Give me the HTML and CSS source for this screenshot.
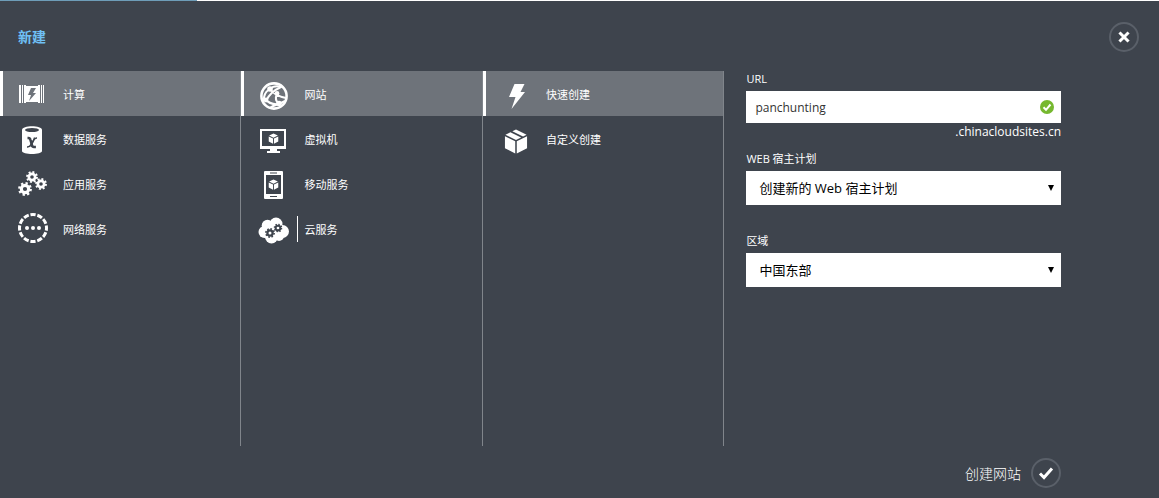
FILE: index.html
```html
<!DOCTYPE html>
<html lang="zh-CN">
<head>
  <meta charset="UTF-8" />
  <title>新建</title>
  <link rel="stylesheet" href="styles.css">
</head>
<body>

  <svg class="defs" aria-hidden="true">
    <symbol id="gear" viewBox="0 0 16 16">
      <circle cx="8" cy="8" r="4.2" fill="none" stroke="currentColor" stroke-width="3.6"/>
      <circle cx="8" cy="8" r="6.6" fill="none" stroke="currentColor" stroke-width="2.6" pathLength="16" stroke-dasharray="1 1"/>
    </symbol>
    <symbol id="box" viewBox="0 0 24 26">
      <path d="M12 0.5L8.2 2.3L19.3 7.8L23 6z M6.2 3.3L1 6L12 11.4L17.3 8.8z M0.5 7.6L11.2 12.8V25.5L0.5 20z M12.8 12.8L23.5 7.6V20L12.8 25.5z"/>
    </symbol>
    <symbol id="cube" viewBox="0 0 12 12">
      <path d="M6 0.6L10.8 2.8L6 5.2L1.2 2.8z M0.8 3.7L5.5 6V11.6L0.8 9.2z M11.2 3.7L6.5 6V11.6L11.2 9.2z"/>
    </symbol>
  </svg>

  <div class="strip"></div>

  <header class="header">
    <h1>新建</h1>
    <button class="round" type="button" aria-label="关闭">
      <svg viewBox="0 0 30 30"><path d="M11.5 11.5l7 7M18.5 11.5l-7 7" fill="none" stroke="currentColor" stroke-width="3" stroke-linecap="square"/></svg>
    </button>
  </header>

  <main class="columns">
    <nav class="menu">
      <button class="item selected" type="button">
        <svg class="icon" viewBox="0 0 32 32">
          <path d="M3 7h2v18H3z M6 7h1v18H6z M25 7h1v18h-1z M27 7h1v18h-1z"/>
          <path d="M8 7h2v1h12V7h2v18h-2v-1H10v1H8z M15 10l-3 7h3l-2 6 7-8h-3l3-5z" fill-rule="evenodd"/>
        </svg>
        <span class="label">计算</span>
      </button>
      <button class="item" type="button">
        <svg class="icon" viewBox="0 0 32 32">
          <path d="M6 7C6 2 26 2 26 7V28C26 32 6 32 6 28z"/>
          <ellipse class="hole" cx="16" cy="7" rx="7" ry="2"/>
          <path class="line" d="M18.5 14.5L15 24" stroke-width="1.2"/>
          <path class="line" d="M11.5 15h1q1.5 0 2 2l1.400 5q.5 2 2 2h2" stroke-width="2.6"/>
          <path class="line" d="M21 15q-2.300-.2-3.500 2.500l-2.500 4q-1.300 2.700-4 2.500" stroke-width="1.6"/>
        </svg>
        <span class="label">数据服务</span>
      </button>
      <button class="item" type="button">
        <svg class="icon" viewBox="0 0 32 32">
          <use href="#gear" x="10" y="3" width="12" height="12"/>
          <use href="#gear" x="19" y="10" width="12" height="12"/>
          <use href="#gear" x="2" y="14" width="14" height="14"/>
        </svg>
        <span class="label">应用服务</span>
      </button>
      <button class="item" type="button">
        <svg class="icon" viewBox="0 0 32 32">
          <circle cx="17" cy="15" r="13.5" fill="none" stroke="currentColor" stroke-width="3" pathLength="120" stroke-dasharray="7.5 2.5" stroke-dashoffset="3.7"/>
          <circle cx="11" cy="15" r="2"/><circle cx="17" cy="15" r="2"/><circle cx="23" cy="15" r="2"/>
        </svg>
        <span class="label">网络服务</span>
      </button>
    </nav>

    <nav class="menu">
      <button class="item selected" type="button">
        <svg class="icon" viewBox="0 0 32 32">
          <g fill="none" stroke="currentColor">
            <circle cx="17" cy="18" r="12.6" stroke-width="2.6"/>
            <path d="M13 11Q6 15 7 23M13 11Q17 7 25 9M13 11Q18 18 29 20M24 9Q13 14 9 23M8 21Q13 27 22 26L28 23M22 26Q15 28 13 30M20 16Q17 22 22 26" stroke-width="2"/>
          </g>
          <circle cx="13" cy="11" r="2.8"/><circle cx="9" cy="22" r="2.4"/><circle cx="22" cy="25.5" r="2.8"/><circle cx="20" cy="15.5" r="2.4"/>
        </svg>
        <span class="label">网站</span>
      </button>
      <button class="item" type="button">
        <svg class="icon" viewBox="0 0 32 32">
          <path d="M3 6h26v20h-9v2h3v2H10v-2h3v-2H3z M5 8v15h22V8z" fill-rule="evenodd"/>
          <use href="#cube" x="11" y="10" width="11" height="11"/>
        </svg>
        <span class="label">虚拟机</span>
      </button>
      <button class="item" type="button">
        <svg class="icon" viewBox="0 0 32 32">
          <path d="M8 3h17q1 0 1 1v26q0 1-1 1H8q-1 0-1-1V4q0-1 1-1z M9 7v19h15V7z M13 4.5v1h7v-1z M13 28v1h7v-1z" fill-rule="evenodd"/>
          <use href="#cube" x="11" y="11" width="11" height="11"/>
        </svg>
        <span class="label">移动服务</span>
      </button>
      <button class="item" type="button">
        <svg class="icon" viewBox="0 0 32 32">
          <circle cx="7.5" cy="19" r="6"/><circle cx="10.5" cy="12.5" r="5.8"/><circle cx="19" cy="11" r="6.5"/><circle cx="25.5" cy="18.5" r="6.5"/><circle cx="14.5" cy="24" r="6.5"/><circle cx="22" cy="23" r="5"/><circle cx="16" cy="17" r="6"/>
          <g class="dark">
            <use href="#gear" x="8" y="15" width="10" height="10"/>
            <use href="#gear" x="16.5" y="10.5" width="9" height="9"/>
          </g>
        </svg>
        <span class="label marked">云服务</span>
      </button>
    </nav>

    <nav class="menu">
      <button class="item selected" type="button">
        <svg class="icon" viewBox="0 0 32 32"><path d="M15.5 6h10l-4 8H26L12.5 31l4-12H10z"/></svg>
        <span class="label">快速创建</span>
      </button>
      <button class="item" type="button">
        <svg class="icon" viewBox="0 0 32 32"><use href="#box" x="5" y="6" width="24" height="25"/></svg>
        <span class="label">自定义创建</span>
      </button>
    </nav>

    <form class="form" id="siteForm">
      <div class="field">
        <label for="url">URL</label>
        <div class="control">
          <input type="text" id="url" value="panchunting" />
          <svg class="valid" viewBox="0 0 14 14" aria-hidden="true"><circle cx="7" cy="7" r="7"/><path d="M3.5 7.3l2.5 2.5 4.5-5.3" fill="none" stroke="#fff" stroke-width="2"/></svg>
        </div>
        <div class="hint">.chinacloudsites.cn</div>
      </div>
      <div class="field">
        <label for="plan">WEB 宿主计划</label>
        <div class="control">
          <select id="plan"><option>创建新的 Web 宿主计划</option></select>
          <svg class="arrow" viewBox="0 0 6 6" aria-hidden="true"><path d="M0 0h6L3 6z"/></svg>
        </div>
        <div class="hint"></div>
      </div>
      <div class="field">
        <label for="region">区域</label>
        <div class="control">
          <select id="region"><option>中国东部</option></select>
          <svg class="arrow" viewBox="0 0 6 6" aria-hidden="true"><path d="M0 0h6L3 6z"/></svg>
        </div>
      </div>
    </form>
  </main>

  <footer class="footer">
    <label for="create">创建网站</label>
    <button class="round" id="create" type="submit" form="siteForm">
      <svg viewBox="0 0 30 30"><path d="M9 15.5l4 4 8-9" fill="none" stroke="currentColor" stroke-width="3"/></svg>
    </button>
  </footer>

</body>
</html>
```
FILE: styles.css
```css
* {
  box-sizing: border-box;
}

body {
  margin: 0;
  min-height: 100vh;
  display: flex;
  flex-direction: column;
  font-family: "Open Sans", "Noto Sans CJK SC", sans-serif;
  font-size: 13px;
  color: #fff;
  background: #3e444d;
}

button, input, select {
  font-family: inherit;
  color: inherit;
  margin: 0;
  border: 0;
  border-radius: 0;
}

button {
  cursor: pointer;
}

svg {
  display: block;
  fill: currentColor;
}

.defs {
  position: absolute;
  width: 0;
  height: 0;
}

.strip {
  height: 1px;
  background: linear-gradient(to right, #6e9db8 17%, #fff 17%);
}

.header {
  height: 70px;
  padding: 2px 20px 0 18px;
  display: flex;
  align-items: center;
  justify-content: space-between;
}

.header h1 {
  margin: 0;
  padding-bottom: 3px;
  font-size: 14px;
  font-weight: bold;
  color: #6fc0f5;
}

.round {
  width: 30px;
  height: 30px;
  padding: 0;
  border: 2px solid #5a6069;
  border-radius: 50%;
  background: none;
  display: flex;
  align-items: center;
  justify-content: center;
}

.round svg {
  width: 30px;
  height: 30px;
  flex: none;
}

.columns {
  flex: 1;
  display: grid;
  grid-template-columns: repeat(3, 5fr) 9fr;
}

.menu {
  font-family: "Noto Sans CJK SC", sans-serif;
  border-right: 1px solid #80858b;
}

.item {
  width: 100%;
  height: 45px;
  padding: 0 0 0 13px;
  border-left: 3px solid transparent;
  background: none;
  display: flex;
  align-items: center;
  text-align: left;
}

.item.selected {
  background: #6e737a;
  border-left-color: #fff;
}

.icon {
  width: 32px;
  height: 32px;
  flex: none;
}

.icon .hole {
  fill: #3e444d;
}

.icon .line {
  fill: none;
  stroke: #3e444d;
}

.icon .dark {
  color: #3e444d;
}

.label {
  margin-left: 8px;
  padding-left: 6px;
  border-left: 1px solid transparent;
  font-size: 11px;
  line-height: 26px;
}

.label.marked {
  border-left-color: #fff;
}

.form {
  padding: 0 98px 0 22px;
}

.field {
  margin-bottom: 10px;
}

.field label {
  display: block;
  margin-bottom: 4px;
  font-size: 11px;
  line-height: 16px;
}

.control {
  position: relative;
}

.control input,
.control select {
  display: block;
  width: 100%;
  height: 34px;
  padding: 0 24px 0 13px;
  font-size: 13px;
  color: #000;
  background: #fff;
  appearance: none;
}

.control input {
  height: 32px;
  padding-left: 9px;
  font-size: 12px;
  color: #333;
}

.valid {
  position: absolute;
  top: 9px;
  right: 7px;
  width: 14px;
  height: 14px;
  fill: #76b82f;
}

.arrow {
  position: absolute;
  top: 14px;
  right: 7px;
  width: 6px;
  height: 6px;
  fill: #000;
}

.hint {
  height: 18px;
  font-size: 12px;
  line-height: 18px;
  text-align: right;
}

.footer {
  padding: 12px 98px 10px;
  display: flex;
  align-items: center;
  justify-content: flex-end;
  gap: 10px;
  font-size: 14px;
  font-weight: 300;
}
```
